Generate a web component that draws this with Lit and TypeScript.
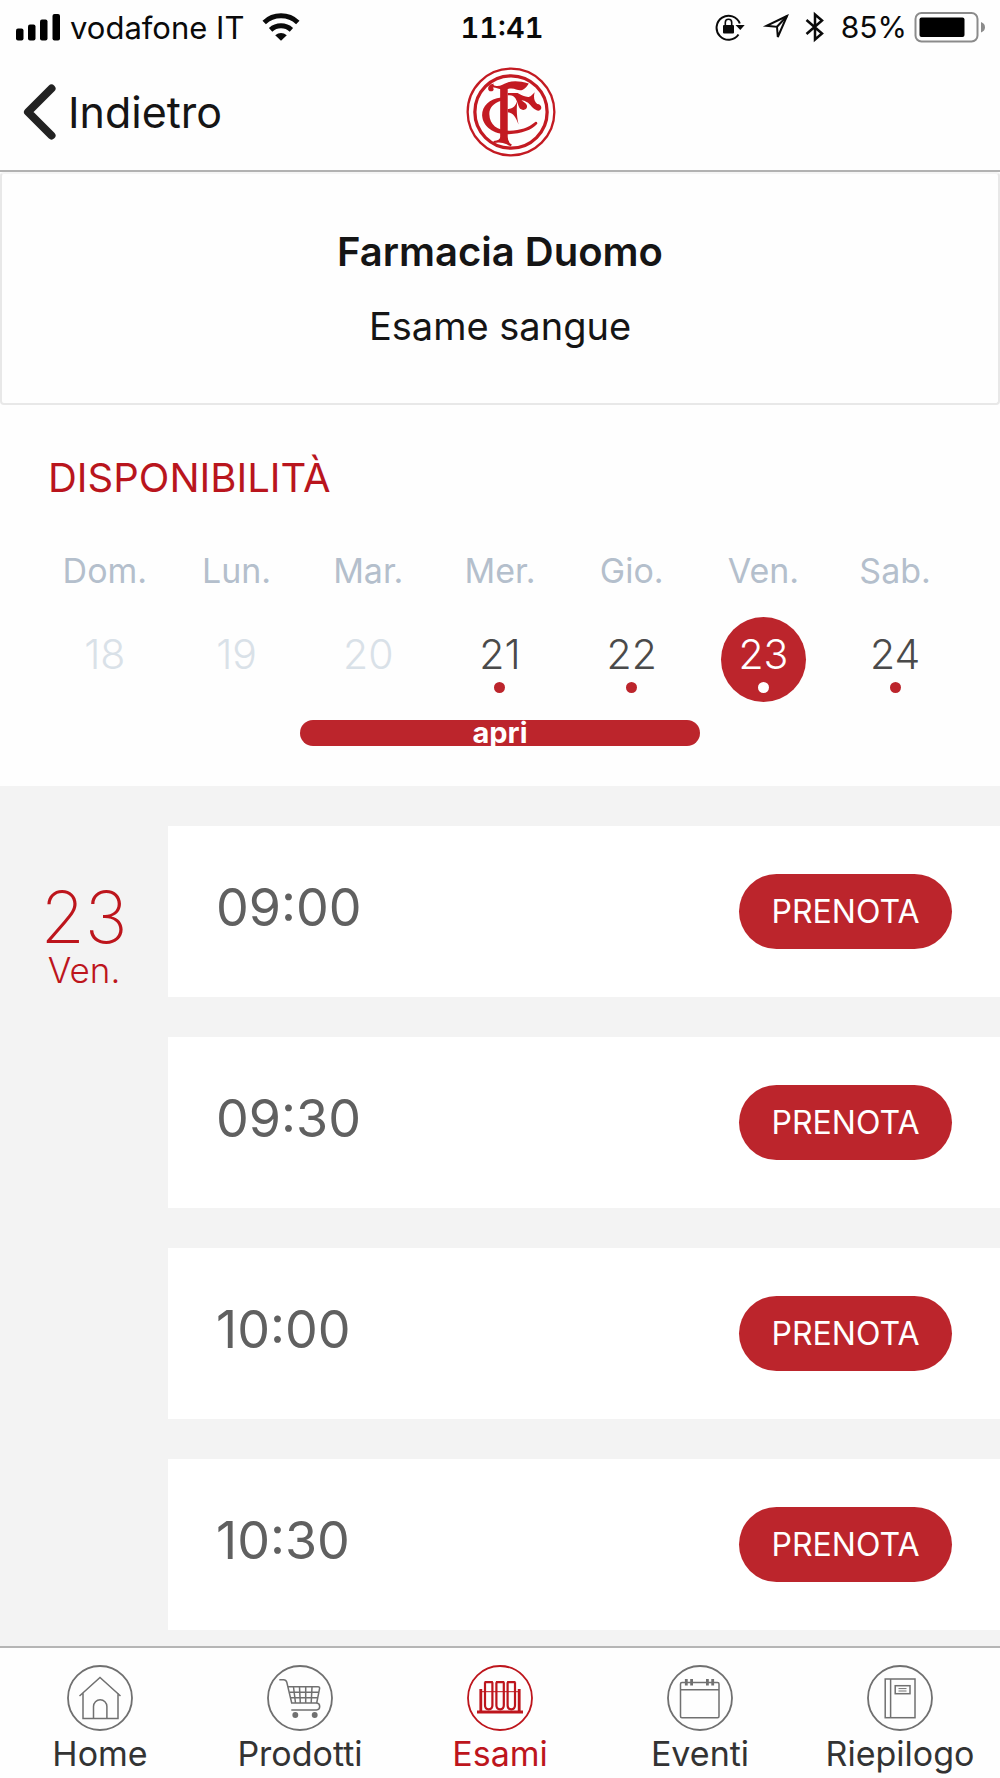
import { LitElement, html, css, svg } from "lit";
import { customElement, property, state } from "lit/decorators.js";
import { classMap } from "lit/directives/class-map.js";

const icons = {
  home: svg`
    <path d="M12.5 31 33 12.500 53.500 31M16 28v25.500h35V28" />
    <path d="M26.500 53.500V41.500a6.700 6.700 0 0 1 13.400 0v12" />`,
  cart: svg`
    <path d="M12.300 14.700h4.200q2.600 0 3.300 2.600L24.700 38H49.700L52.600 23.500q.2-1.800-1.600-1.800H21" />
    <path d="M49.700 38q3 .4 3 3.500t-3.200 3.500H24.300" />
    <path d="M26.500 22l2 16M32.500 22l.8 16M38.700 22v16M45 22l-.8 16M22.500 27.300h29.300M23.700 32.700h27" />
    <circle class="solid" cx="28.300" cy="50" r="2.200" />
    <circle class="solid" cx="47.700" cy="50" r="2.200" />`,
  tubes: svg`
    <path class="bold" d="M13.800 24v22M52.200 24v22" />
    <path class="bold" d="M10 47h46" />
    <path class="fine" d="M14 26.700h38" />
    <path class="mid" d="M17.500 17.200h8.400M18 17.200v23q0 4 3.700 4.200 3.700-.2 3.700-4.200v-23M28.900 17.200h8.400M29.400 17.200v23q0 4 3.700 4.200 3.700-.2 3.700-4.200v-23M40.100 17.200h8.400M40.600 17.200v23q0 4 3.700 4.200 3.700-.2 3.700-4.200v-23" />`,
  calendar: svg`
    <rect x="13.500" y="17.500" width="38.500" height="35.200" rx="1.500" />
    <path d="M13.500 24.700H52" />
    <path class="bold" d="M19.300 14v6.500M24.600 14v6.500M40.400 14v6.500M45.700 14v6.500" />`,
  book: svg`
    <rect x="18.200" y="14" width="29.800" height="38.700" />
    <path d="M23.600 14v38.700" />
    <rect x="28.200" y="20.700" width="14.800" height="8" />
    <path class="fine" d="M31.500 23.600h8M31.500 26h8" />`,
};

type IconName = keyof typeof icons;

@customElement("tab-icon")
class TabIcon extends LitElement {
  static styles = css`
    :host { display: block; line-height: 0; }
    .icon { width: 66px; height: 66px; fill: none; stroke: currentColor; stroke-width: 1.5; }
    .ring { stroke-width: 1.8; }
    .solid { fill: currentColor; }
    .bold { stroke-width: 2.8; }
    .mid { stroke-width: 2.2; }
    .fine { stroke-width: 1; }
  `;
  @property() name: IconName = "home";

  render() {
    return html`<svg class="icon" viewBox="0 0 66 66" aria-hidden="true">
      <circle class="ring" cx="33" cy="33" r="32" />${icons[this.name]}
    </svg>`;
  }
}

@customElement("status-bar")
class StatusBar extends LitElement {
  static styles = css`
    :host { display: block; }
    .bar {
      display: grid; grid-template-columns: 1fr auto 1fr; align-items: center;
      height: 54px; padding: 0 12px 0 16px; color: #0a0a0a; font-size: 31px;
    }
    .group { display: flex; align-items: center; }
    .end { justify-content: flex-end; }
    .signal { width: 45px; height: 28px; margin-right: 9px; }
    .wifi { width: 38px; height: 28px; margin-left: 18px; }
    .clock { font-weight: 600; font-size: 29px; font-variant-numeric: tabular-nums; }
    .lock { width: 30px; height: 30px; margin-right: 17px; }
    .arrow { width: 28px; height: 28px; margin-right: 15px; }
    .bluetooth { width: 20px; height: 32px; margin-right: 16px; }
    .percent { font-size: 30px; }
    .battery { width: 74px; height: 32px; margin-left: 7px; }
  `;

  render() {
    return html`<div class="bar">
      <div class="group">
        <svg class="signal" viewBox="0 0 45 28" aria-hidden="true">
          <rect x="0" y="15.500" width="7.500" height="12" rx="2" />
          <rect x="12" y="11.500" width="7.500" height="16" rx="2" />
          <rect x="24" y="6.500" width="7.500" height="21" rx="2" />
          <rect x="36.500" y="1" width="7.500" height="26.500" rx="2" />
        </svg>
        <span>vodafone IT</span>
        <svg class="wifi" viewBox="0 0 38 28" fill="none" stroke="currentColor" stroke-width="5" aria-hidden="true">
          <path d="M2.200 9.500a24.500 24.500 0 0 1 33.600 0" />
          <path d="M8.600 16.800a15.500 15.500 0 0 1 20.800 0" />
          <path d="M19 27.800l-5.800-5.600q5.800-4.600 11.600 0z" fill="currentColor" stroke="none" />
        </svg>
      </div>
      <span class="clock">11:41</span>
      <div class="group end">
        <svg class="lock" viewBox="0 0 30 30" fill="none" stroke="currentColor" stroke-width="2" aria-hidden="true">
          <path d="M24.800 11.500A12 12 0 1 0 23.500 22.500" />
          <path d="M20.500 13h9.200l-4.400 5z" fill="currentColor" stroke="none" />
          <rect x="8" y="13" width="11" height="8.500" rx="1" fill="currentColor" stroke="none" />
          <path d="M10.300 14v-3.500a3.200 3.200 0 0 1 6.400 0v3.500" stroke-width="1.600" />
        </svg>
        <svg class="arrow" viewBox="0 0 28 28" fill="none" stroke="currentColor" stroke-width="2" aria-hidden="true">
          <path d="M25 3 4.500 12.800l10.500 1 .8 10.200z" />
          <path d="M25 3 15 13.800" />
        </svg>
        <svg class="bluetooth" viewBox="0 0 20 32" fill="none" stroke="currentColor" stroke-width="2.500" aria-hidden="true">
          <path d="M1.500 9 17 22.500 10 28.500v-25L17 9.500 1.500 23" />
        </svg>
        <span class="percent">85%</span>
        <svg class="battery" viewBox="0 0 74 32" aria-hidden="true">
          <rect x="1.500" y="2" width="62" height="28.500" rx="6" fill="none" stroke="#8b8b8b" stroke-width="2" />
          <rect x="5.500" y="6.500" width="45" height="19.500" rx="2" />
          <path d="M67 11q4 1.500 4 5.300t-4 5.200z" fill="#8b8b8b" />
        </svg>
      </div>
    </div>`;
  }
}

@customElement("brand-mark")
class BrandMark extends LitElement {
  static styles = css`
    :host { display: block; line-height: 0; }
    .mark { width: 90px; height: 90px; fill: #c31a22; }
    .ring { fill: none; stroke: #c31a22; }
  `;

  render() {
    return html`<svg class="mark" viewBox="15 13 274 274" role="img" aria-label="Logo della farmacia">
      <circle class="ring" cx="152" cy="150" r="132" stroke-width="7" />
      <circle class="ring" cx="152" cy="150" r="110" stroke-width="10" />
      <path d="M122 106C86 110 64 132 64 160c2 36 36 59 81 58 40-2 70-13 87-32q1-6-5-6c-22 18-47 27-79 27-38-1-61-17-62-51 0-18 12-32 36-40z" />
      <path d="M119 74V226q0 10-20 12v6q18-3 28 0 14 2 23 11l5-5q-13-8-13-24V70z" />
      <path d="M89 66c-10 8-8 21 2 21 9 0 10-8 6-11 6-2 14 3 24 5l21-1c23-7 30 9 46 2 8-4 14-12 18-19-26-7-46-9-64-3-12 4-22 12-34 11-8 0-12-5-8-8z" />
      <path d="M142 92h30c12 6 24 13 34 12 8-2 12-8 18-14-4 14-2 27 8 36 14 0 17 18 4 20-12 0-22-14-32-24-8-6-16-8-20-8 6 6 16 9 17 18 0 11-10 14-18 10-10-4-9-26-21-38-5-5-12-5-20-5z" />
      <path d="M142 141c16 0 26-11 30-29-4 25-3 51 3 76-8-20-16-36-33-37z" />
    </svg>`;
  }
}

@customElement("app-root")
class AppRoot extends LitElement {
  static styles = css`
    :host { display: block; font-family: Inter, Roboto, "Liberation Sans", sans-serif; color: #151515; }
    * { box-sizing: border-box; }
    button { font: inherit; color: inherit; background: none; border: 0; padding: 0; margin: 0; cursor: pointer; }
    h1, h2, p { margin: 0; }
    .screen { display: flex; flex-direction: column; min-height: 100vh; background: #fefefe; }

    .top { display: grid; grid-template-columns: 1fr auto 1fr; align-items: center; height: 118px; padding-left: 22px; border-bottom: 2px solid #b2b2b2; }
    .back { display: flex; align-items: center; gap: 12px; justify-self: start; font-size: 43px; color: #151515; text-decoration: none; }
    .chevron { width: 34px; height: 58px; }

    .card { padding: 40px 0 39px; border: 2px solid #e8e8e8; border-top-color: #f5f5f5; border-radius: 4px; text-align: center; font-size: 38px; line-height: 75px; }
    .pharmacy { font-size: 40px; font-weight: 600; }

    .availability { padding: 50px 39px 40px; }
    .heading { padding-left: 9px; font-size: 40px; line-height: 46px; font-weight: 400; color: #b9151d; }
    .week { display: grid; grid-template-columns: repeat(7, 1fr); margin-top: 50px; }
    .day { display: flex; flex-direction: column; align-items: center; gap: 26px; }
    .weekday { font-size: 34px; line-height: 40px; font-weight: 400; color: #b4bfcc; }
    .date { display: flex; flex-direction: column; align-items: center; gap: 3px; width: 85px; height: 85px; padding-top: 12px; border-radius: 50%; font-size: 41px; line-height: 50px; font-weight: 300; color: #4a4a4a; }
    .date.past { color: #d9e1e8; }
    .date.selected { background: #bc252c; color: #fff; }
    .dot { width: 11px; height: 11px; border-radius: 50%; background: #bc252c; }
    .selected .dot { background: #fff; }
    .open { display: block; width: 400px; max-width: 100%; height: 26px; margin: 18px auto 0; border-radius: 13px; background: #bc252c; color: #fff; font-size: 29px; line-height: 26px; font-weight: 700; }

    .agenda { flex: 1; display: grid; grid-template-columns: 168px 1fr; align-items: start; padding: 40px 0 16px; background: #f3f3f3; }
    .current { padding-top: 61px; text-align: center; color: #bd151c; }
    .number { font-size: 72px; line-height: 60px; font-weight: 200; }
    .name { font-size: 35px; line-height: 46px; font-weight: 300; }
    .slots { display: grid; gap: 40px; margin: 0; padding: 0; list-style: none; }
    .slot { display: flex; align-items: center; justify-content: space-between; height: 171px; padding: 0 48px; background: #fff; }
    .time { padding-bottom: 7px; font-size: 52px; line-height: 60px; color: #606060; }
    .book { width: 213px; height: 75px; border-radius: 38px; background: #bc252c; color: #fff; font-size: 32px; }

    .tabs { display: grid; grid-template-columns: repeat(5, 1fr); padding: 17px 0 4px; border-top: 2px solid #b5b5b5; background: #fefefe; }
    .tab { display: flex; flex-direction: column; align-items: center; gap: 3px; font-size: 34px; line-height: 40px; color: #333; text-decoration: none; }
    .tab tab-icon { color: #707070; }
    .tab.active, .tab.active tab-icon { color: #bd151c; }
  `;

  @state() private selected = 23;

  private days = [
    { name: "Dom.", date: 18, free: false },
    { name: "Lun.", date: 19, free: false },
    { name: "Mar.", date: 20, free: false },
    { name: "Mer.", date: 21, free: true },
    { name: "Gio.", date: 22, free: true },
    { name: "Ven.", date: 23, free: true },
    { name: "Sab.", date: 24, free: true },
  ];
  private times = ["09:00", "09:30", "10:00", "10:30"];
  private tabs: { label: string; icon: IconName }[] = [
    { label: "Home", icon: "home" },
    { label: "Prodotti", icon: "cart" },
    { label: "Esami", icon: "tubes" },
    { label: "Eventi", icon: "calendar" },
    { label: "Riepilogo", icon: "book" },
  ];

  render() {
    const current = this.days.find((d) => d.date === this.selected)!;
    return html`<div class="screen">
      <status-bar></status-bar>
      <header class="top">
        <a class="back" href="#indietro">
          <svg class="chevron" viewBox="0 0 34 58" fill="none" stroke="#222" stroke-width="8" stroke-linecap="round" stroke-linejoin="round" aria-hidden="true">
            <path d="M29.500 5.500 6 29l23.500 23.500" />
          </svg>
          <span>Indietro</span>
        </a>
        <brand-mark></brand-mark>
      </header>
      <section class="card">
        <h1 class="pharmacy">Farmacia Duomo</h1>
        <p>Esame sangue</p>
      </section>
      <section class="availability">
        <h2 class="heading">DISPONIBILITÀ</h2>
        <div class="week">
          ${this.days.map((d) => html`<div class="day">
            <span class="weekday">${d.name}</span>
            <button
              class=${classMap({ date: true, past: !d.free, selected: d.date === this.selected })}
              ?disabled=${!d.free}
              aria-pressed=${d.date === this.selected}
              @click=${() => (this.selected = d.date)}
            ><span>${d.date}</span>${d.free ? html`<span class="dot"></span>` : ""}</button>
          </div>`)}
        </div>
        <button class="open">apri</button>
      </section>
      <main class="agenda">
        <div class="current">
          <div class="number">${current.date}</div>
          <div class="name">${current.name}</div>
        </div>
        <ul class="slots">
          ${this.times.map((t) => html`<li class="slot">
            <time class="time">${t}</time>
            <button class="book">PRENOTA</button>
          </li>`)}
        </ul>
      </main>
      <nav class="tabs">
        ${this.tabs.map((t) => html`<a class=${classMap({ tab: true, active: t.icon === "tubes" })} href="#${t.icon}">
          <tab-icon name=${t.icon}></tab-icon><span>${t.label}</span>
        </a>`)}
      </nav>
    </div>`;
  }
}
